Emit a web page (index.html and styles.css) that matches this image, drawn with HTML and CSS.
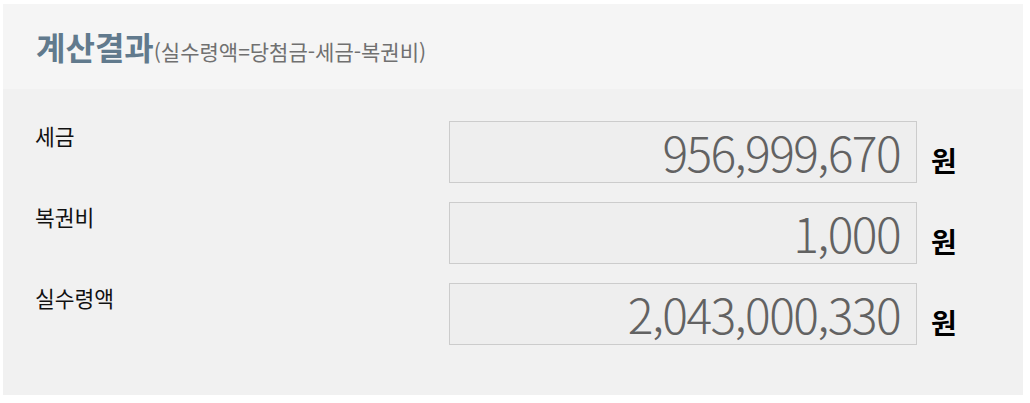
FILE: index.html
```html
<!DOCTYPE html>
<html lang="ko">
<head>
<meta charset="utf-8">
<title>계산결과</title>
<link rel="stylesheet" href="styles.css">
</head>
<body>
<section class="panel">
  <header class="panel-head">
    <h2 class="title">계산결과<span class="sub">(실수령액=당첨금-세금-복권비)</span></h2>
  </header>
  <div class="panel-body">
    <div class="row">
      <div class="label">세금</div>
      <div class="field">956,999,670</div>
      <div class="unit">원</div>
    </div>
    <div class="row">
      <div class="label">복권비</div>
      <div class="field">1,000</div>
      <div class="unit">원</div>
    </div>
    <div class="row">
      <div class="label">실수령액</div>
      <div class="field">2,043,000,330</div>
      <div class="unit">원</div>
    </div>
  </div>
</section>
</body>
</html>
```

FILE: styles.css
```css
html, body {
  margin: 0;
  padding: 0;
  background: #ffffff;
}
body {
  font-family: "Noto Sans CJK KR", "Noto Sans", sans-serif;
}
.panel {
  margin: 4px 7px 0 3px;
  background: #f1f1f1;
}
.panel-head {
  background: #f5f5f5;
  height: 85px;
  box-sizing: border-box;
  padding: 22px 0 0 33px;
}
.title {
  margin: 0;
  font-size: 32px;
  font-weight: 700;
  color: #617a8d;
  line-height: 40px;
}
.sub {
  font-size: 21px;
  font-weight: 400;
  color: #707070;
}
.panel-body {
  padding: 32px 0 50px 32px;
  display: flex;
  flex-direction: column;
  gap: 19px;
}
.row {
  display: flex;
  align-items: baseline;
}
.label {
  width: 414px;
  align-self: flex-start;
  padding-top: 3px;
  font-size: 21.5px;
  color: #111111;
  line-height: 24px;
}
.field {
  width: 468px;
  height: 62px;
  box-sizing: border-box;
  border: 1px solid #cccccc;
  background: #eeeeee;
  text-align: right;
  padding-right: 16px;
  font-size: 48px;
  font-weight: 300;
  letter-spacing: -1.6px;
  line-height: 58px;
  color: #626262;
}
.unit {
  margin-left: 14px;
  font-size: 28px;
  font-weight: 700;
  color: #000000;
}
```
